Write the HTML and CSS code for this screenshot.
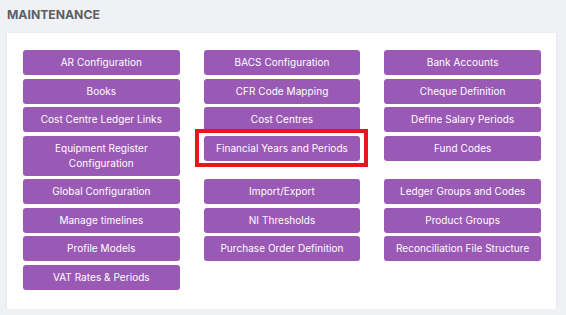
FILE: index.html
```html
<!DOCTYPE html>
<html lang="en">
<head>
<meta charset="utf-8">
<title>Maintenance</title>
<link rel="stylesheet" href="styles.css">
</head>
<body>
<h1 class="title">MAINTENANCE</h1>
<div class="card">
  <div class="grid">
    <a class="btn">AR Configuration</a>
    <a class="btn">BACS Configuration</a>
    <a class="btn">Bank Accounts</a>
    <a class="btn">Books</a>
    <a class="btn">CFR Code Mapping</a>
    <a class="btn">Cheque Definition</a>
    <a class="btn">Cost Centre Ledger Links</a>
    <a class="btn">Cost Centres</a>
    <a class="btn">Define Salary Periods</a>
    <a class="btn">Equipment Register Configuration</a>
    <a class="btn highlight">Financial Years and Periods</a>
    <a class="btn">Fund Codes</a>
    <a class="btn">Global Configuration</a>
    <a class="btn">Import/Export</a>
    <a class="btn">Ledger Groups and Codes</a>
    <a class="btn">Manage timelines</a>
    <a class="btn">NI Thresholds</a>
    <a class="btn">Product Groups</a>
    <a class="btn">Profile Models</a>
    <a class="btn">Purchase Order Definition</a>
    <a class="btn">Reconciliation File Structure</a>
    <a class="btn">VAT Rates &amp; Periods</a>
  </div>
</div>
</body>
</html>
```
FILE: styles.css
```css
html, body {
  margin: 0;
  padding: 0;
  background: #f0f1f5;
}
body {
  padding: 7px 10px 0 7px;
  font-family: Inter, "Noto Sans", Arial, sans-serif;
}
.title {
  margin: 0 0 10px 0;
  font-size: 12.2px;
  line-height: 16px;
  font-weight: 700;
  color: #5c5f66;
}
.card {
  background: #ffffff;
  width: 549px;
  box-sizing: border-box;
  padding: 17px 15px 19px 16px;
  box-shadow: 0 1px 3px rgba(0, 0, 0, 0.08);
}
.grid {
  display: grid;
  grid-template-columns: repeat(3, 1fr);
  column-gap: 24px;
  row-gap: 3.5px;
  align-items: start;
}
.btn {
  display: block;
  background: #9b59b6;
  color: #ffffff;
  border-radius: 3px;
  text-align: center;
  font-size: 10px;
  font-weight: 400;
  letter-spacing: 0.05px;
  line-height: 15px;
  padding: 5px 6px;
  text-decoration: none;
  position: relative;
}
.highlight::after {
  content: "";
  position: absolute;
  left: -9px;
  right: -8px;
  top: -7px;
  bottom: -6px;
  border: 4px solid #e8171f;
  pointer-events: none;
}
```
